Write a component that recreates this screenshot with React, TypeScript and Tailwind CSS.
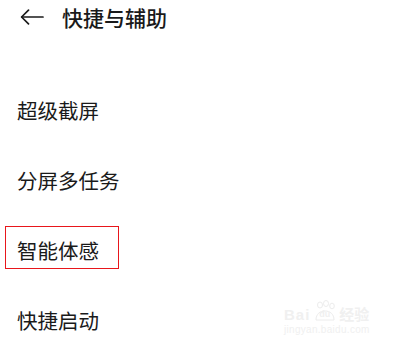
import React from "react";

const font = { fontFamily: '"Noto Sans CJK SC", "Noto Sans", sans-serif' };

export default function App() {
  const items = ["超级截屏", "分屏多任务", "智能体感", "快捷启动"];
  return (
    <div className="relative w-[400px] h-[350px] bg-white overflow-hidden text-[#1a1a1a]" style={font}>
      <div className="flex items-center h-[34px] pl-[20px]">
        <svg width="24" height="16" viewBox="0 0 24 16" fill="none" stroke="#1a1a1a" strokeWidth="1.7" strokeLinecap="round" strokeLinejoin="round">
          <path d="M23 8H2" />
          <path d="M8.5 1.2L1.6 8l6.9 6.8" />
        </svg>
        <span className="ml-[18px] text-[21px] font-medium leading-none">快捷与辅助</span>
      </div>
      <div className="mt-[41px] flex flex-col">
        {items.map((t, i) => (
          <div key={t} className="relative h-[70px] flex items-center pl-[17px]">
            <span className="text-[20.5px] leading-none">{t}</span>
            {i === 2 && (
              <div className="absolute left-[5px] top-[11px] w-[114px] h-[43px] border border-[#e8161b]" />
            )}
          </div>
        ))}
      </div>
      <div className="absolute left-[284px] top-[300px] flex flex-col items-start text-[#f0f0f0]" style={{ fontFamily: '"Liberation Sans", "Noto Sans CJK SC", sans-serif' }}>
        <div className="flex items-end">
          <span className="text-[15px] font-bold leading-none tracking-[1px]">Bai</span>
          <span className="ml-[3px] relative flex items-end">
            <svg width="24" height="22" viewBox="0 0 24 22" fill="none" stroke="#ececec" strokeWidth="1">
              <ellipse cx="7" cy="5" rx="2.5" ry="3" />
              <ellipse cx="13" cy="3.5" rx="2.5" ry="3" />
              <ellipse cx="19" cy="6" rx="2.3" ry="2.8" />
              <path d="M3 20c0-6 4-9 9-9s9 3 9 9z" />
            </svg>
            <span className="absolute left-[6px] bottom-[1px] text-[9px] font-bold">du</span>
          </span>
          <span className="ml-[2px] text-[15px] font-bold leading-none">经验</span>
        </div>
        <span className="mt-[3px] text-[10px] leading-none tracking-[0.3px]">jingyan.baidu.com</span>
      </div>
    </div>
  );
}
